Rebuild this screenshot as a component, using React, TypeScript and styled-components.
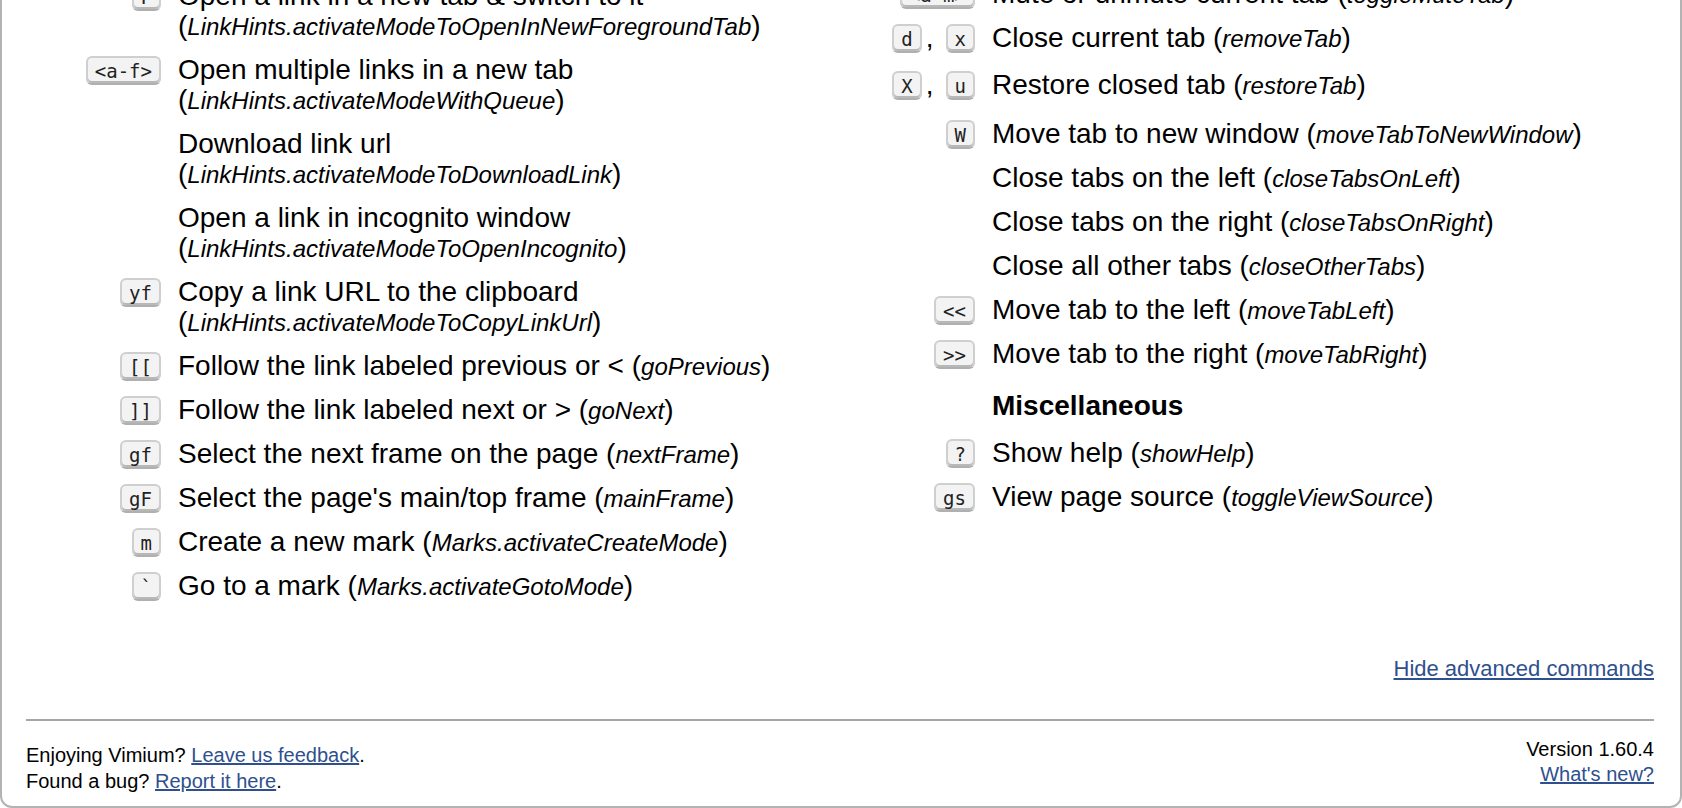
import React from 'react';
import styled, { createGlobalStyle } from 'styled-components';

const Global = createGlobalStyle`
  html, body { margin: 0; padding: 0; background: #ffffff; }
  body { overflow: hidden; font-family: "Liberation Sans", Arial, Helvetica, sans-serif; color: #000; }
`;

const Viewport = styled.div`
  height: 808px;
  overflow: hidden;
  display: flex;
  flex-direction: column;
  justify-content: flex-end;
`;

const Panel = styled.div`
  flex-shrink: 0;
  background: #ffffff;
  border: 2px solid #b3b3b3;
  border-radius: 12px;
  padding: 0 26px 12px 24px;
  display: flex;
  flex-direction: column;
`;

const Columns = styled.div`
  display: grid;
  grid-template-columns: 1fr 1fr;
  align-items: start;
`;

const Column = styled.div<{ $offset: number }>`
  display: flex;
  flex-direction: column;
  padding-top: ${(p) => p.$offset}px;
`;

const Row = styled.div<{ $extra?: number }>`
  display: grid;
  grid-template-columns: 135px 1fr;
  column-gap: 17px;
  padding: 7px 0 ${(p) => 7 + (p.$extra ?? 0)}px;
`;

const KeyCell = styled.div`
  height: 30px;
  display: flex;
  justify-content: flex-end;
  align-items: center;
`;

const Key = styled.span`
  display: inline-block;
  box-sizing: border-box;
  height: 29px;
  padding: 1px 7px 0;
  line-height: 24px;
  font-family: "DejaVu Sans Mono", "Liberation Mono", monospace;
  font-size: 19px;
  color: #222;
  background: #f3f3f3;
  border: 2px solid #cfcfcf;
  border-bottom-color: #b0b0b0;
  border-radius: 6px;
  box-shadow: inset 0 -2px 0 #b8b8b8;
  white-space: pre;
`;

const Comma = styled.span`
  font-size: 28px;
  line-height: 30px;
  margin: 0 12px 0 4px;
  color: #000;
`;

const Desc = styled.div`
  font-size: 28px;
  line-height: 30px;
  color: #000;
`;

const CmdName = styled.span`
  font-style: italic;
  font-size: 24px;
  line-height: 1;
`;

const HeadingRow = styled.div`
  display: grid;
  grid-template-columns: 135px 1fr;
  column-gap: 17px;
  padding: 15px 0 10px;
`;

const Heading = styled.h2`
  grid-column: 2;
  margin: 0;
  font-size: 28px;
  line-height: 30px;
  font-weight: bold;
  color: #000;
`;

const ToggleRow = styled.div`
  margin-top: 48px;
  display: flex;
  justify-content: flex-end;
  font-size: 22px;
  line-height: 26px;
`;

const Link = styled.a`
  color: #2f508e;
  text-decoration: underline;
  cursor: pointer;
`;

const Rule = styled.hr`
  margin: 37px 0 0;
  border: none;
  height: 2px;
  background: #a6a6a6;
`;

const Footer = styled.div`
  margin-top: 16px;
  display: flex;
  justify-content: space-between;
  align-items: flex-start;
  font-size: 20px;
`;

const FooterLeft = styled.div`
  padding-top: 5px;
  line-height: 26px;
`;

const FooterRight = styled.div`
  line-height: 25px;
  text-align: right;
`;

type Cmd = { keys?: string[]; desc: string; cmd: string; extra?: number };
type Item = Cmd | { heading: string };

const leftItems: Item[] = [
  { keys: ['F'], desc: 'Open a link in a new tab & switch to it', cmd: 'LinkHints.activateModeToOpenInNewForegroundTab' },
  { keys: ['<a-f>'], desc: 'Open multiple links in a new tab', cmd: 'LinkHints.activateModeWithQueue' },
  { desc: 'Download link url', cmd: 'LinkHints.activateModeToDownloadLink' },
  { desc: 'Open a link in incognito window', cmd: 'LinkHints.activateModeToOpenIncognito' },
  { keys: ['yf'], desc: 'Copy a link URL to the clipboard', cmd: 'LinkHints.activateModeToCopyLinkUrl' },
  { keys: ['[['], desc: 'Follow the link labeled previous or <', cmd: 'goPrevious' },
  { keys: [']]'], desc: 'Follow the link labeled next or >', cmd: 'goNext' },
  { keys: ['gf'], desc: 'Select the next frame on the page', cmd: 'nextFrame' },
  { keys: ['gF'], desc: "Select the page's main/top frame", cmd: 'mainFrame' },
  { keys: ['m'], desc: 'Create a new mark', cmd: 'Marks.activateCreateMode' },
  { keys: ['`'], desc: 'Go to a mark', cmd: 'Marks.activateGotoMode' },
];

const rightItems: Item[] = [
  { keys: ['<a-m>'], desc: 'Mute or unmute current tab', cmd: 'toggleMuteTab' },
  { keys: ['d', 'x'], desc: 'Close current tab', cmd: 'removeTab', extra: 3 },
  { keys: ['X', 'u'], desc: 'Restore closed tab', cmd: 'restoreTab', extra: 5 },
  { keys: ['W'], desc: 'Move tab to new window', cmd: 'moveTabToNewWindow' },
  { desc: 'Close tabs on the left', cmd: 'closeTabsOnLeft' },
  { desc: 'Close tabs on the right', cmd: 'closeTabsOnRight' },
  { desc: 'Close all other tabs', cmd: 'closeOtherTabs' },
  { keys: ['<<'], desc: 'Move tab to the left', cmd: 'moveTabLeft' },
  { keys: ['>>'], desc: 'Move tab to the right', cmd: 'moveTabRight' },
  { heading: 'Miscellaneous' },
  { keys: ['?'], desc: 'Show help', cmd: 'showHelp' },
  { keys: ['gs'], desc: 'View page source', cmd: 'toggleViewSource' },
];

function CommandRow({ item }: { item: Cmd }) {
  const keys = item.keys ?? [];
  return (
    <Row $extra={item.extra}>
      <KeyCell>
        {keys.map((k, i) => (
          <React.Fragment key={k}>
            {i > 0 && <Comma>,</Comma>}
            <Key>{k}</Key>
          </React.Fragment>
        ))}
      </KeyCell>
      <Desc>
        {item.desc} (<CmdName>{item.cmd}</CmdName>)
      </Desc>
    </Row>
  );
}

function CommandList({ items, offset }: { items: Item[]; offset: number }) {
  return (
    <Column $offset={offset}>
      {items.map((it, i) =>
        'heading' in it ? (
          <HeadingRow key={i}>
            <Heading>{it.heading}</Heading>
          </HeadingRow>
        ) : (
          <CommandRow key={i} item={it} />
        )
      )}
    </Column>
  );
}

export default function App() {
  return (
    <>
      <Global />
      <Viewport>
        <Panel>
          <Columns>
            <CommandList items={leftItems} offset={2} />
            <CommandList items={rightItems} offset={0} />
          </Columns>
          <ToggleRow>
            <Link>Hide advanced commands</Link>
          </ToggleRow>
          <Rule />
          <Footer>
            <FooterLeft>
              Enjoying Vimium? <Link>Leave us feedback</Link>.
              <br />
              Found a bug? <Link>Report it here</Link>.
            </FooterLeft>
            <FooterRight>
              Version 1.60.4
              <br />
              <Link>What's new?</Link>
            </FooterRight>
          </Footer>
        </Panel>
      </Viewport>
    </>
  );
}
